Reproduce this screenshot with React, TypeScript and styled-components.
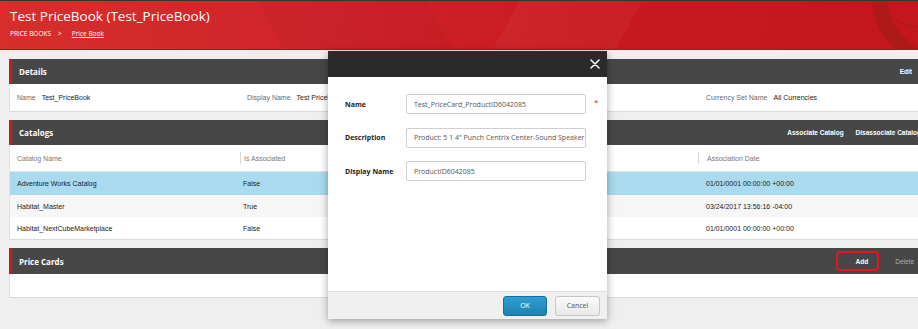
import React from "react";
import styled, { createGlobalStyle, css } from "styled-components";

const GlobalStyle = createGlobalStyle`
  html, body {
    margin: 0;
    padding: 0;
    background: #efefef;
    overflow: hidden;
    font-family: "Liberation Sans", Arial, sans-serif;
  }
  * { box-sizing: border-box; }
`;

const Page = styled.div`
  position: relative;
  width: 918px;
  height: 329px;
  overflow: hidden;
  background: #efefef;
`;

/* ---------- header ---------- */

const Header = styled.header`
  position: relative;
  height: 50px;
  border-top: 1px solid #353535;
  border-bottom: 1px solid #b3111a;
  padding: 6px 0 0 10px;
  overflow: hidden;
  background:
    linear-gradient(118deg, transparent 55%, rgba(255, 255, 255, 0.035) 55%, rgba(255, 255, 255, 0.035) 68%, transparent 68%),
    linear-gradient(62deg, transparent 30%, rgba(0, 0, 0, 0.03) 30%, rgba(0, 0, 0, 0.03) 48%, transparent 48%),
    linear-gradient(100deg, #d72e2b 0%, #d0242a 35%, #c8191f 65%, #c3161d 100%);
  font-family: "Open Sans", "Liberation Sans", sans-serif;
  color: #fff;
`;

const HeaderArt = styled.svg`
  position: absolute;
  right: 0;
  top: 0;
  width: 80px;
  height: 48px;
`;

const Title = styled.h1`
  margin: 0;
  font-size: 13.5px;
  font-weight: 400;
  line-height: 18px;
`;

const Crumbs = styled.div`
  display: flex;
  align-items: center;
  gap: 7px;
  margin-top: 4px;
  font-size: 6.5px;
  line-height: 10px;
`;

const CrumbLink = styled.span`
  text-decoration: underline;
  margin-left: 3px;
`;

/* ---------- panels ---------- */

const Content = styled.main`
  display: flex;
  flex-direction: column;
  gap: 8px;
  padding: 9px 0 0 9px;
  width: 950px;
`;

const Panel = styled.section`
  width: 941px;
  background: #fff;
  border-left: 1px solid #e2e2e2;
  border-bottom: 1px solid #dadada;
`;

const PanelHead = styled.div<{ $h?: number }>`
  display: flex;
  align-items: center;
  justify-content: space-between;
  height: ${(p) => p.$h ?? 25}px;
  margin-left: -1px;
  padding-left: 7px;
  background: #474747;
  border-left: 3px solid #d3161c;
`;

const PanelTitle = styled.h2`
  margin: 0;
  font-family: "Open Sans", "Liberation Sans", sans-serif;
  font-size: 8px;
  font-weight: 700;
  color: #fff;
`;

const Actions = styled.div<{ $trail: number; $gap: number }>`
  display: flex;
  align-items: center;
  gap: ${(p) => p.$gap}px;
  padding-right: ${(p) => p.$trail}px;
`;

const Action = styled.span<{ $muted?: boolean; $boxed?: boolean }>`
  font-size: 6.5px;
  font-weight: ${(p) => (p.$muted ? 400 : 700)};
  color: ${(p) => (p.$muted ? "#aeaeae" : "#fff")};
  white-space: nowrap;
  ${(p) =>
    p.$boxed &&
    css`
      display: flex;
      align-items: center;
      height: 20px;
      padding: 0 9px 0 18px;
      border: 2px solid #e3161f;
      border-radius: 4px;
    `}
`;

const cols = css`
  display: grid;
  grid-template-columns: 230px 458px 1fr;
  align-items: center;
`;

const DetailsBody = styled.div`
  ${cols}
  height: 27px;
`;

const Field = styled.div<{ $pad: number }>`
  display: flex;
  gap: 6px;
  padding-left: ${(p) => p.$pad}px;
  font-size: 7px;
  white-space: nowrap;
`;

const FieldLabel = styled.span`
  color: #6a6a6a;
`;

const FieldValue = styled.span`
  color: #222;
`;

const HeadRow = styled.div`
  ${cols}
  height: 27px;
  border-bottom: 1px solid #e4e4e4;
`;

const HeadCell = styled.div<{ $gap?: number }>`
  display: flex;
  align-items: center;
  gap: ${(p) => p.$gap ?? 0}px;
  padding-left: ${(p) => (p.$gap === undefined ? 7 : 0)}px;
  font-size: 7px;
  color: #777;
  white-space: nowrap;
`;

const Divider = styled.span`
  width: 1px;
  height: 12px;
  background: #d8d8d8;
`;

const Row = styled.div<{ $tone: "selected" | "alt" | "plain"; $h: number }>`
  ${cols}
  height: ${(p) => p.$h}px;
  background: ${(p) =>
    p.$tone === "selected" ? "#a9daee" : p.$tone === "alt" ? "#f6f6f6" : "#fff"};
`;

const Cell = styled.div<{ $pad: number }>`
  padding-left: ${(p) => p.$pad}px;
  font-size: 7px;
  color: #222;
  white-space: nowrap;
`;

const EmptyBody = styled.div`
  height: 23px;
`;

/* ---------- modal ---------- */

const Modal = styled.div`
  position: absolute;
  left: 328px;
  top: 51px;
  width: 279px;
  height: 268px;
  display: flex;
  flex-direction: column;
  background: #fff;
  box-shadow: 0 2px 8px rgba(0, 0, 0, 0.35);
  font-family: "Open Sans", "Liberation Sans", sans-serif;
`;

const ModalHead = styled.div`
  display: flex;
  align-items: center;
  justify-content: flex-end;
  height: 26px;
  padding-right: 7px;
  background: #2a2a2a;
`;

const CloseIcon = styled.svg`
  width: 10px;
  height: 10px;
`;

const ModalBody = styled.div`
  flex: 1;
  display: grid;
  grid-template-columns: 61px 180px 1fr;
  grid-auto-rows: 20px;
  row-gap: 13.5px;
  align-content: start;
  align-items: center;
  padding: 17px 7px 0 17px;
`;

const Label = styled.label`
  font-size: 7px;
  font-weight: 700;
  color: #222;
`;

const Input = styled.div`
  display: flex;
  align-items: center;
  height: 20px;
  padding-left: 7px;
  border: 1px solid #cfcfcf;
  border-radius: 2px;
  font-size: 7px;
  color: #555;
  white-space: nowrap;
  overflow: hidden;
`;

const Required = styled.span`
  align-self: start;
  padding: 4px 0 0 8px;
  font-size: 8px;
  line-height: 8px;
  color: #e0101a;
`;

const ModalFoot = styled.div`
  display: flex;
  align-items: center;
  justify-content: flex-end;
  gap: 8px;
  height: 28px;
  padding-right: 7px;
  background: #f0f0f0;
  border-top: 1px solid #dedede;
`;

const Button = styled.button<{ $primary?: boolean }>`
  height: 20px;
  width: ${(p) => (p.$primary ? 44 : 45)}px;
  padding: 0;
  border-radius: 3px;
  font-family: inherit;
  font-size: 7px;
  ${(p) =>
    p.$primary
      ? css`
          color: #fff;
          background: linear-gradient(#2f9fd3, #1e80b2);
          border: 1px solid #1a6e99;
        `
      : css`
          color: #555;
          background: linear-gradient(#fafafa, #e9e9e9);
          border: 1px solid #c6c6c6;
        `}
`;

const catalogs = [
  { name: "Adventure Works Catalog", assoc: "False", date: "01/01/0001 00:00:00 +00:00", tone: "selected" as const, h: 23 },
  { name: "Habitat_Master", assoc: "True", date: "03/24/2017 13:56:16 -04:00", tone: "alt" as const, h: 22 },
  { name: "Habitat_NextCubeMarketplace", assoc: "False", date: "01/01/0001 00:00:00 +00:00", tone: "plain" as const, h: 22 },
];

export default function App() {
  return (
    <Page>
      <GlobalStyle />
      <Header>
        <HeaderArt viewBox="838 0 80 48">
          <circle cx="945" cy="-5" r="65.5" fill="none" stroke="#a91b17" strokeOpacity="0.85" strokeWidth="15" />
          <path d="M886 14 Q905 24 918 26" fill="none" stroke="#b01a18" strokeWidth="1.2" />
        </HeaderArt>
        <Title>Test PriceBook (Test_PriceBook)</Title>
        <Crumbs>
          <span>PRICE BOOKS</span>
          <span>&gt;</span>
          <CrumbLink>Price Book</CrumbLink>
        </Crumbs>
      </Header>

      <Content>
        <Panel>
          <PanelHead>
            <PanelTitle>Details</PanelTitle>
            <Actions $trail={38} $gap={16}>
              <Action>Edit</Action>
            </Actions>
          </PanelHead>
          <DetailsBody>
            <Field $pad={7}>
              <FieldLabel>Name</FieldLabel>
              <FieldValue>Test_PriceBook</FieldValue>
            </Field>
            <Field $pad={7}>
              <FieldLabel>Display Name</FieldLabel>
              <FieldValue>Test PriceBook</FieldValue>
            </Field>
            <Field $pad={8}>
              <FieldLabel>Currency Set Name</FieldLabel>
              <FieldValue>All Currencies</FieldValue>
            </Field>
          </DetailsBody>
        </Panel>

        <Panel>
          <PanelHead>
            <PanelTitle>Catalogs</PanelTitle>
            <Actions $trail={29} $gap={12}>
              <Action>Associate Catalog</Action>
              <Action>Disassociate Catalog</Action>
            </Actions>
          </PanelHead>
          <HeadRow>
            <HeadCell>Catalog Name</HeadCell>
            <HeadCell $gap={3}>
              <Divider />
              Is Associated
            </HeadCell>
            <HeadCell $gap={8}>
              <Divider />
              Association Date
            </HeadCell>
          </HeadRow>
          {catalogs.map((c) => (
            <Row key={c.name} $tone={c.tone} $h={c.h}>
              <Cell $pad={7}>{c.name}</Cell>
              <Cell $pad={3}>{c.assoc}</Cell>
              <Cell $pad={8}>{c.date}</Cell>
            </Row>
          ))}
        </Panel>

        <Panel>
          <PanelHead $h={26}>
            <PanelTitle>Price Cards</PanelTitle>
            <Actions $trail={36} $gap={16}>
              <Action $boxed>Add</Action>
              <Action $muted>Delete</Action>
            </Actions>
          </PanelHead>
          <EmptyBody />
        </Panel>
      </Content>

      <Modal>
        <ModalHead>
          <CloseIcon viewBox="0 0 10 10">
            <path d="M1 1 L9 9 M9 1 L1 9" stroke="#fff" strokeWidth="1.5" strokeLinecap="round" />
          </CloseIcon>
        </ModalHead>
        <ModalBody>
          <Label>Name</Label>
          <Input>Test_PriceCard_ProductID6042085</Input>
          <Required>*</Required>
          <Label>Description</Label>
          <Input>Product: 5 1 4" Punch Centrix Center-Sound Speaker</Input>
          <span />
          <Label>Display Name</Label>
          <Input>ProductID6042085</Input>
          <span />
        </ModalBody>
        <ModalFoot>
          <Button $primary>OK</Button>
          <Button>Cancel</Button>
        </ModalFoot>
      </Modal>
    </Page>
  );
}
